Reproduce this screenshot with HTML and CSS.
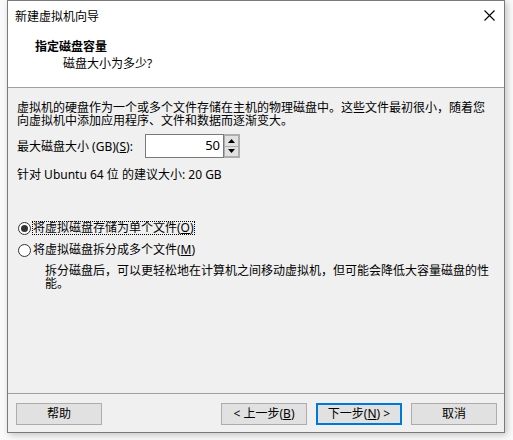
FILE: index.html
```html
<!DOCTYPE html>
<html lang="zh-CN">
<head>
<meta charset="utf-8">
<title>新建虚拟机向导</title>
<link rel="stylesheet" href="styles.css">
</head>
<body>
<div class="window">
  <div class="titlebar">
    <span class="title">新建虚拟机向导</span>
    <span class="close">
      <svg width="11" height="11" viewBox="0 0 11 11"><path d="M0.5 0.5L10.5 10.5M10.5 0.5L0.5 10.5" stroke="#000" stroke-width="1.1" fill="none"/></svg>
    </span>
  </div>
  <div class="header">
    <div class="h-title">指定磁盘容量</div>
    <div class="h-sub">磁盘大小为多少?</div>
  </div>
  <div class="content">
    <p class="intro">虚拟机的硬盘作为一个或多个文件存储在主机的物理磁盘中。这些文件最初很小，随着您向虚拟机中添加应用程序、文件和数据而逐渐变大。</p>
    <div class="size-row">
      <span class="size-label">最大磁盘大小 (GB)(<u>S</u>):</span>
      <div class="spin">
        <div class="spin-input">50</div>
        <div class="spin-btns">
          <div class="spin-btn"><svg width="7" height="4" viewBox="0 0 7 4"><path d="M3.5 0L7 4H0Z" fill="#000"/></svg></div>
          <div class="spin-btn"><svg width="7" height="4" viewBox="0 0 7 4"><path d="M0 0H7L3.5 4Z" fill="#000"/></svg></div>
        </div>
      </div>
    </div>
    <p class="rec">针对 Ubuntu 64 位 的建议大小: 20 GB</p>
    <div class="radio-row first">
      <span class="radio checked"></span>
      <span class="radio-label focus">将虚拟磁盘存储为单个文件(<u>O</u>)</span>
    </div>
    <div class="radio-row second">
      <span class="radio"></span>
      <span class="radio-label">将虚拟磁盘拆分成多个文件(<u>M</u>)</span>
    </div>
    <p class="desc">拆分磁盘后，可以更轻松地在计算机之间移动虚拟机，但可能会降低大容量磁盘的性能。</p>
  </div>
  <div class="footer">
    <button class="btn">帮助</button>
    <span class="spacer"></span>
    <button class="btn">&lt; 上一步(<u>B</u>)</button>
    <button class="btn default">下一步(<u>N</u>) &gt;</button>
    <button class="btn">取消</button>
  </div>
</div>
</body>
</html>
```

FILE: styles.css
```css
* { box-sizing: border-box; }
html, body { margin: 0; padding: 0; }
body {
  background: #fafafa;
  font-family: "Noto Sans", "Noto Sans CJK SC", sans-serif;
  font-size: 12px;
  color: #000;
  width: 513px;
  height: 440px;
  overflow: hidden;
}
.window {
  margin-left: 7px;
  width: 498px;
  height: 433px;
  border: 1px solid #7a7a7a;
  background: #f0f0f0;
  display: flex;
  flex-direction: column;
  box-shadow: 2px 2px 7px rgba(0,0,0,0.22);
}
.titlebar {
  height: 30px;
  background: #fff;
  display: flex;
  align-items: center;
  justify-content: space-between;
  padding: 0 9px 0 7px;
}
.title { line-height: 30px; padding-top: 1px; }
.close { display: flex; align-items: center; margin-top: -1px; }
.header {
  height: 57px;
  background: #fff;
  border-bottom: 1px solid #a0a0a0;
  padding: 7px 0 0 27px;
}
.h-title { font-weight: bold; line-height: 17px; }
.h-sub { line-height: 17px; padding-left: 28px; }
.content {
  flex: 1;
  padding: 13px 0 0 9px;
}
.intro {
  margin: 0;
  width: 472px;
  line-height: 13px;
}
.size-row {
  margin-top: 7px;
  display: flex;
  align-items: center;
  height: 24px;
}
.size-label { width: 128px; }
.size-label u, .radio-label u, .btn u { text-decoration: underline; text-underline-offset: 1px; }
.spin { display: flex; height: 24px; }
.spin-input {
  width: 79px;
  height: 24px;
  background: #fff;
  border: 1px solid #7a7a7a;
  text-align: right;
  padding-right: 3px;
  line-height: 21px;
  font-size: 13px;
}
.spin-btns {
  display: flex;
  flex-direction: column;
  width: 16px;
  height: 24px;
  border: 1px solid #adadad;
  border-left: none;
  background: #fff;
}
.spin-btn {
  flex: 1;
  background: #e1e1e1;
  border: 1px solid #adadad;
  display: flex;
  align-items: center;
  justify-content: center;
}
.spin-btn + .spin-btn { border-top: none; }
.rec {
  margin: 10px 0 0;
  line-height: 13px;
}
.radio-row {
  display: flex;
  align-items: center;
  height: 14px;
  padding-left: 1px;
}
.radio-row.first { margin-top: 40px; }
.radio-row.second { margin-top: 8px; }
.radio {
  width: 13px;
  height: 13px;
  border: 1px solid #333;
  border-radius: 50%;
  background: #fff;
  display: flex;
  align-items: center;
  justify-content: center;
  margin-right: 1px;
}
.radio.checked::after {
  content: "";
  width: 7px;
  height: 7px;
  border-radius: 50%;
  background: #333;
}
.radio-label { line-height: 12px; padding: 0; border: 1px solid transparent; }
.radio-label.focus { border: 1px dotted #000; }
.desc {
  margin: 7px 0 0 28px;
  width: 450px;
  line-height: 13px;
}
.footer {
  height: 39px;
  border-top: 1px solid #a0a0a0;
  padding: 9px 7px 7px 8px;
  display: flex;
  align-items: flex-start;
  gap: 9px;
}
.spacer { flex: 1; }
.btn {
  width: 86px;
  height: 22px;
  background: #e1e1e1;
  border: 1px solid #adadad;
  font-family: inherit;
  font-size: 12px;
  color: #000;
  padding: 0;
  line-height: 18px;
  margin: 0;
}
.btn.default { border: 2px solid #0078d7; }
```
